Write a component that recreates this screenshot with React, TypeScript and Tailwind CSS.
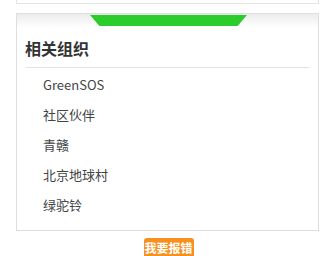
import React from "react";

const orgs = ["GreenSOS", "社区伙伴", "青赣", "北京地球村", "绿驼铃"];

const App = () => {
  return (
    <div
      className="w-[322px] h-[256px] overflow-hidden bg-white"
      style={{ fontFamily: '"Microsoft YaHei", "Noto Sans CJK SC", sans-serif' }}
    >
      <div className="ml-4 w-[303px] h-[4px] border-x border-b border-[#e3e3e3]" />

      <div className="ml-4 mt-[9px] w-[303px] h-[218px] border border-[#dedede]">
        <div className="relative h-[14px] bg-gradient-to-b from-[#ececec] to-white">
          <div
            className="absolute left-[73px] top-[1px] w-[157px] h-[11px] bg-[#2dcc2d]"
            style={{ clipPath: "polygon(0 0, 100% 0, 94% 100%, 6% 100%)" }}
          />
        </div>

        <div className="pl-[8px] pt-[6px] h-[39px] text-[16px] font-semibold text-[#333] leading-[28px]">
          相关组织
        </div>
        <div className="mx-[9px] border-t border-[#e2e2e2]" />

        <ul className="pt-[2px] pl-[26px]">
          {orgs.map((name) => (
            <li key={name} className="h-[30px] leading-[30px] text-[13px] text-[#444]">
              {name}
            </li>
          ))}
        </ul>
      </div>

      <div className="ml-4 w-[303px] flex justify-center mt-[7px] pl-[2px]">
        <button className="w-[50px] h-[20px] rounded-[3px] bg-[#f7901e] text-white text-[12px] font-bold leading-[20px]">
          我要报错
        </button>
      </div>
    </div>
  );
};

export default App;
